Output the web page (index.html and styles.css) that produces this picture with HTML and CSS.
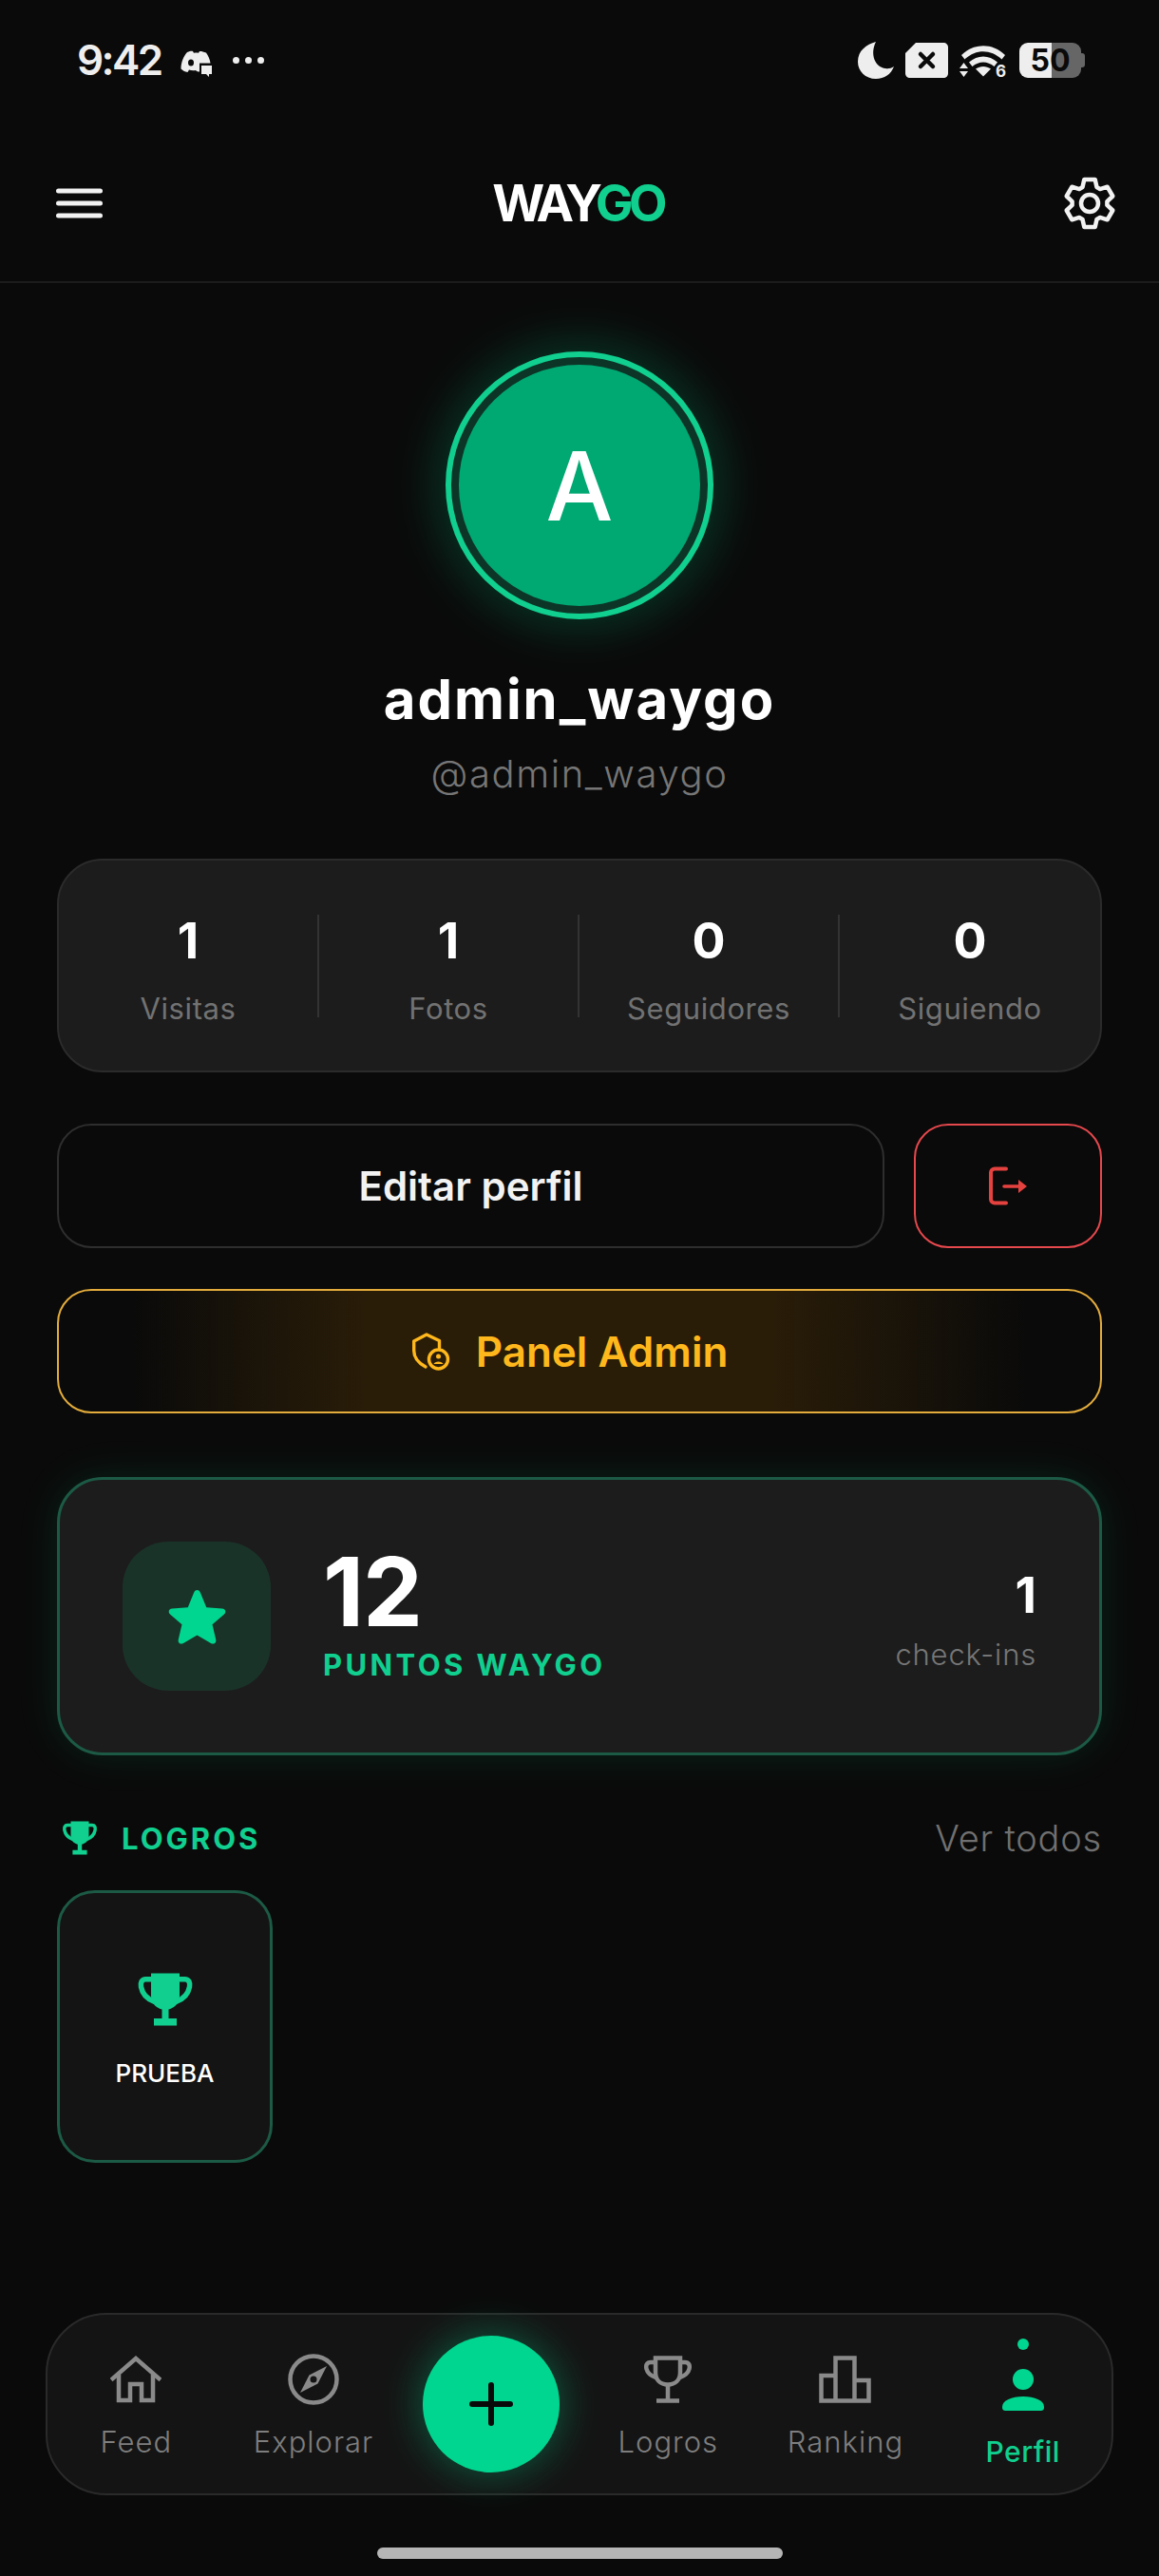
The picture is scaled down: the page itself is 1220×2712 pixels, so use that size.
FILE: index.html
```html
<!DOCTYPE html>
<html lang="es">

<head>
    <meta charset="UTF-8">
    <meta name="viewport" content="width=device-width, initial-scale=1.0">
    <title>WayGo - Perfil</title>
    <link rel="stylesheet" href="styles.css">
</head>

<body>
    <svg class="defs" width="0" height="0">
        <symbol id="trophy-solid" viewBox="0 0 24 24">
            <path d="M6 1h12v9.500c0 3-2 5-4.600 5.700V20h3.400v3H7.200v-3h3.400v-3.800C8 15.500 6 13.500 6 10.500z" fill="currentColor" />
            <path d="M6.500 3.500H3.800C2 3.500 1.500 5 1.800 6.700 2.300 9.500 4 11.700 7.500 13M17.500 3.500h2.700c1.800 0 2.300 1.500 2 3.200-.5 2.800-2.200 5-5.700 6.300" fill="none" stroke="currentColor" stroke-width="2.200" />
        </symbol>
    </svg>

    <div class="app">
        <div class="status-bar">
            <div class="status-left">
                <span class="time">9:42</span>
                <svg class="discord" viewBox="0 0 33 28" width="33" height="28">
                    <path d="M7 2c3-1.300 5-1.500 6-1l1 1.800c2-.3 3.500-.3 5 0L20 1c1.500-.3 4 .3 7 1.500 2.500 3.500 4 7.500 4.500 11H20v9c-1.500 0-3-.5-4-1.500-3 .5-5 0-7-.5L7.500 23C4.500 22.500 2 21 .5 19.500.5 13 3 6.500 7 2z" fill="#eee" />
                    <ellipse cx="11" cy="13" rx="3" ry="3.500" fill="#0a0a0a" />
                    <path d="M22 16h11v9h-3v3l-3-3h-5z" fill="#eee" />
                </svg>
                <span class="dots"><i></i><i></i><i></i></span>
            </div>
            <div class="status-right">
                <svg viewBox="0 0 38 39" width="38" height="39">
                    <path d="M19 0C9 3 0 9 0 21c0 10 8 18 19 18 9 0 16-5 19-13-3 2-6 2.500-9 2C19 27 12 14 19 0z" fill="#eee" />
                </svg>
                <svg viewBox="0 0 45 37" width="45" height="37">
                    <path d="M11 0h29c3 0 5 2 5 5v27c0 3-2 5-5 5H5c-3 0-5-2-5-5V11z" fill="#eee" />
                    <path d="M16 12l13 13M29 12L16 25" stroke="#0a0a0a" stroke-width="4.500" stroke-linecap="round" />
                </svg>
                <svg class="wifi" viewBox="0 0 51 37" width="51" height="37">
                    <path d="M2 13C15 0 35 0 48 13l-3.500 4.500C33 6.500 17 6.500 5.500 17.500z" fill="#eee" />
                    <path d="M10 20.500c9-8 21-8 30 0l-3.500 4.500c-7-6-16-6-23 0z" fill="#eee" />
                    <path d="M17 27.500c5-3.500 11-3.500 16 0l-8 8z" fill="#eee" />
                    <path d="M4.500 21l4.500 6H0zM4.500 36L9 30H0z" fill="#eee" />
                    <text x="38" y="36" class="wifi-six">6</text>
                </svg>
                <div class="battery">50</div>
            </div>
        </div>

        <header class="top-bar">
            <svg class="menu-icon" viewBox="0 0 49 32" width="49" height="32">
                <path d="M2.500 3h44M2.500 16h44M2.500 29h44" stroke="#f2f2f2" stroke-width="5" stroke-linecap="round" />
            </svg>
            <div class="logo">WAY<span>GO</span></div>
            <svg class="gear-icon" viewBox="0 0 56 56" width="56" height="56" fill="none" stroke="#f2f2f2" stroke-width="4.500" stroke-linejoin="round">
                <circle cx="28" cy="28" r="9" />
                <polygon transform="translate(28 28)" points="-7.500,-16.900 -5.700,-25 5.700,-25 7.500,-16.900 10.900,-14.950 18.600,-17.300 24.300,-7.500 18.400,-1.950 18.400,1.950 24.300,7.500 18.600,17.300 10.900,14.950 7.500,16.900 5.700,25 -5.700,25 -7.500,16.900 -10.900,14.950 -18.600,17.300 -24.300,7.500 -18.400,1.950 -18.400,-1.950 -24.300,-7.500 -18.600,-17.300 -10.900,-14.950" />
            </svg>
        </header>

        <main class="content">
            <section class="profile">
                <div class="avatar-ring">
                    <div class="avatar">A</div>
                </div>
                <h1 class="name">admin_waygo</h1>
                <p class="handle">@admin_waygo</p>
            </section>

            <section class="stats">
                <div class="stat">
                    <div class="stat-value">1</div>
                    <div class="stat-label">Visitas</div>
                </div>
                <div class="stat">
                    <div class="stat-value">1</div>
                    <div class="stat-label">Fotos</div>
                </div>
                <div class="stat">
                    <div class="stat-value">0</div>
                    <div class="stat-label">Seguidores</div>
                </div>
                <div class="stat">
                    <div class="stat-value">0</div>
                    <div class="stat-label">Siguiendo</div>
                </div>
            </section>

            <div class="actions">
                <button class="btn btn-edit">Editar perfil</button>
                <button class="btn btn-logout">
                    <svg viewBox="0 0 40 41" width="40" height="41" fill="none" stroke="#e5423f" stroke-width="4">
                        <path d="M18 2.500H6a4 4 0 0 0-4 4v28a4 4 0 0 0 4 4h12" stroke-linecap="round" />
                        <path d="M16 21h17" stroke-width="3.600" stroke-linecap="round" />
                        <path d="M31 14l9 7-9 7z" fill="#e5423f" stroke="none" />
                    </svg>
                </button>
            </div>

            <button class="btn btn-admin">
                <svg viewBox="0 0 40 40" width="40" height="40" fill="none" stroke="#ffb81c" stroke-width="3.400" stroke-linejoin="round" stroke-linecap="round">
                    <path d="M14 36C6.500 32 1.700 26 1.700 19V9L15 2l13.500 6.500V16" />
                    <circle cx="27.500" cy="28" r="10" />
                    <circle cx="27.500" cy="25" r="2.500" fill="#ffb81c" stroke="none" />
                    <path d="M22.500 33c1-3.500 9-3.500 10 0z" fill="#ffb81c" stroke="none" />
                </svg>
                Panel Admin
            </button>

            <section class="points">
                <div class="points-icon">
                    <svg viewBox="0 0 24 24" width="61" height="60">
                        <path d="M12 .800c.7 0 1.100.5 1.400 1.200l2.500 6.100 6.600.5c1.400.1 1.900 1.500.9 2.400l-5 4.300 1.500 6.400c.3 1.300-1 2.200-2.100 1.500L12 19.800l-5.800 3.400c-1.100.7-2.400-.2-2.100-1.500l1.500-6.400-5-4.300c-1-.9-.5-2.300.9-2.400l6.600-.5L10.600 2c.3-.7.700-1.200 1.400-1.200z" fill="#00d68f" />
                    </svg>
                </div>
                <div class="points-main">
                    <div class="points-value">12</div>
                    <div class="points-label">PUNTOS WAYGO</div>
                </div>
                <div class="points-side">
                    <div class="side-value">1</div>
                    <div class="side-label">check-ins</div>
                </div>
            </section>

            <section class="achievements">
                <div class="section-head">
                    <div class="section-title">
                        <svg width="38" height="38"><use href="#trophy-solid" /></svg>
                        LOGROS
                    </div>
                    <span class="see-all">Ver todos</span>
                </div>
                <div class="badge">
                    <svg width="60" height="60"><use href="#trophy-solid" /></svg>
                    <span>PRUEBA</span>
                </div>
            </section>
        </main>

        <nav class="tabs">
            <div class="tab">
                <svg viewBox="0 0 54 48" width="54" height="54" fill="none" stroke="#8a8a8a" stroke-width="4.500">
                    <path d="M1 24.500L27 2l26 22.500" />
                    <path d="M9 19v27h12V29h12v17h12V19" />
                </svg>
                <span>Feed</span>
            </div>
            <div class="tab">
                <svg viewBox="0 0 54 54" width="54" height="54">
                    <circle cx="27" cy="27" r="24.500" fill="none" stroke="#8a8a8a" stroke-width="4.500" />
                    <path d="M41 13L31.500 31.500 13 41 22.500 22.500z" fill="#8a8a8a" />
                    <circle cx="27" cy="27" r="3.500" fill="#141414" />
                </svg>
                <span>Explorar</span>
            </div>
            <div class="tab tab-fab">
                <button class="fab">
                    <svg viewBox="0 0 46 46" width="46" height="46">
                        <path d="M23 3v40M3 23h40" stroke="#0a0a0a" stroke-width="6" stroke-linecap="round" />
                    </svg>
                </button>
            </div>
            <div class="tab">
                <svg viewBox="0 0 50 50" width="50" height="54" fill="none" stroke="#8a8a8a" stroke-width="4.500">
                    <path d="M12 2.500h26v15c0 8-5 13-13 13s-13-5-13-13z" />
                    <path d="M12 7H7C3 7 1.500 10 2.500 14c1 4 4 7 10 9M38 7h5c4 0 5.500 3 4.500 7-1 4-4 7-10 9M25 30v17M13 47.500h24" />
                </svg>
                <span>Logros</span>
            </div>
            <div class="tab">
                <svg viewBox="0 0 55 50" width="55" height="54" fill="none" stroke="#8a8a8a" stroke-width="4.500">
                    <path d="M2.500 47.500V21h15v26.500zM17.500 47.500V2.500h20v45zM37.500 47.500V26h15v21.500z" />
                </svg>
                <span>Ranking</span>
            </div>
            <div class="tab tab-active">
                <i class="tab-dot"></i>
                <svg viewBox="0 0 44 44" width="44" height="44" fill="#00d68f">
                    <circle cx="22" cy="11" r="11" />
                    <path d="M0 40c0-7 10-11 22-11s22 4 22 11c0 3-1 4-4 4H4c-3 0-4-1-4-4z" />
                </svg>
                <span>Perfil</span>
            </div>
        </nav>

        <div class="home-row"><div class="home-bar"></div></div>
    </div>
</body>

</html>
```

FILE: styles.css
```css
* {
    box-sizing: border-box;
}

body {
    margin: 0;
    background-color: #0a0a0a;
    color: #fff;
    font-family: Inter, "Noto Sans", sans-serif;
}

.defs {
    display: block;
    height: 0;
}

.app {
    display: flex;
    flex-direction: column;
    height: 2712px;
    overflow: hidden;
}

/* status bar */
.status-bar {
    display: flex;
    justify-content: space-between;
    height: 131px;
    padding: 43px 82px 0 81px;
}

.status-left,
.status-right {
    display: flex;
    align-items: center;
    height: 40px;
}

.time {
    font-size: 44px;
    font-weight: 600;
    letter-spacing: -2.600px;
    color: #eee;
    margin-right: 20px;
}

.discord {
    margin: 8px 22px 0 0;
}

.dots {
    display: flex;
    gap: 6px;
}

.dots i {
    width: 7px;
    height: 7px;
    border-radius: 50%;
    background-color: #eee;
}

.status-right {
    gap: 12px;
}

.wifi {
    overflow: visible;
}

.wifi-six {
    font-size: 17px;
    font-weight: 700;
    fill: #eee;
}

.battery {
    position: relative;
    width: 65px;
    height: 37px;
    border-radius: 9px;
    background: linear-gradient(90deg, #eee 53%, #666 53%);
    color: #0a0a0a;
    font-size: 32px;
    font-weight: 700;
    line-height: 37px;
    text-align: center;
}

.battery::after {
    content: "";
    position: absolute;
    right: -4px;
    top: 11px;
    width: 4px;
    height: 15px;
    border-radius: 0 3px 3px 0;
    background-color: #666;
}

/* header */
.top-bar {
    display: grid;
    grid-template-columns: 1fr auto 1fr;
    align-items: center;
    height: 167px;
    padding: 0 45px;
    border-bottom: 2px solid #1c1c1c;
}

.menu-icon {
    margin-left: 14px;
}

.gear-icon {
    justify-self: end;
}

.logo {
    margin-right: 4px;
    font-size: 53px;
    font-weight: 700;
    letter-spacing: -4.800px;
}

.logo span {
    color: #10cf8f;
}

.content {
    padding: 0 60px;
}

/* avatar */
.profile {
    display: flex;
    flex-direction: column;
    align-items: center;
    padding-top: 72px;
}

.avatar-ring {
    width: 282px;
    height: 282px;
    padding: 8px;
    border: 6px solid #10cf8f;
    border-radius: 50%;
    background-color: #0c3527;
    box-shadow: 0 0 60px rgba(0, 214, 143, 0.3);
}

.avatar {
    display: flex;
    align-items: center;
    justify-content: center;
    height: 100%;
    border-radius: 50%;
    background-color: #00a872;
    font-size: 100px;
    font-weight: 500;
}

.name {
    margin: 49px 0 0;
    font-size: 58px;
    line-height: 70px;
    font-weight: 700;
    letter-spacing: 2px;
}

.handle {
    margin: 21px 0 0;
    font-size: 40px;
    line-height: 46px;
    font-weight: 300;
    letter-spacing: 1.600px;
    color: #767676;
}

/* stats */
.stats {
    display: grid;
    grid-template-columns: repeat(4, 1fr);
    height: 225px;
    margin-top: 66px;
    padding-top: 57px;
    background-color: #1c1c1c;
    border: 2px solid #2b2b2b;
    border-radius: 48px;
}

.stat {
    height: 108px;
    text-align: center;
    border-right: 2px solid #333;
}

.stat:last-child {
    border-right: none;
}

.stat-value {
    margin-top: -3px;
    font-size: 52px;
    line-height: 62px;
    font-weight: 700;
}

.stat-label {
    margin-top: 21px;
    font-size: 31px;
    line-height: 38px;
    color: #727272;
    letter-spacing: 0.600px;
}

/* buttons */
.actions {
    display: flex;
    gap: 31px;
    margin-top: 54px;
}

.btn {
    display: flex;
    align-items: center;
    justify-content: center;
    height: 131px;
    padding: 0;
    background-color: #0a0a0a;
    border-radius: 36px;
    font-family: inherit;
    color: #f2f2f2;
    cursor: pointer;
}

.btn-edit {
    flex: 1;
    border: 2px solid #2e2e2e;
    font-size: 42px;
    font-weight: 600;
}

.btn-logout {
    width: 198px;
    border: 2px solid #e5484d;
}

.btn-admin {
    gap: 27px;
    width: 100%;
    margin-top: 43px;
    padding-right: 20px;
    border: 2px solid #e3ac3c;
    background: linear-gradient(90deg, #0a0a0a 7%, #2a1d08 30%, #2a1d08 68%, #0a0a0a 93%);
    color: #ffb81c;
    font-size: 44px;
    font-weight: 600;
}

/* points */
.points {
    display: flex;
    align-items: center;
    height: 293px;
    margin-top: 67px;
    padding: 0 66px;
    background-color: #1c1c1c;
    border: 3px solid #1c5a45;
    border-radius: 48px;
    box-shadow: 0 0 44px rgba(0, 214, 143, 0.12);
}

.points-icon {
    display: flex;
    align-items: center;
    justify-content: center;
    width: 156px;
    height: 157px;
    border-radius: 48px;
    background-color: #1a3329;
}

.points-main {
    flex: 1;
    margin-left: 55px;
    padding-bottom: 9px;
}

.points-value {
    font-size: 100px;
    line-height: 104px;
    font-weight: 700;
    letter-spacing: -1px;
}

.points-label {
    margin-top: 7px;
    font-size: 31px;
    line-height: 36px;
    font-weight: 700;
    letter-spacing: 3.400px;
    color: #10cf8f;
}

.points-side {
    padding-top: 7px;
    text-align: right;
}

.side-value {
    font-size: 52px;
    line-height: 60px;
    font-weight: 700;
}

.side-label {
    margin-top: 14px;
    font-size: 31px;
    line-height: 36px;
    font-weight: 300;
    letter-spacing: 0.800px;
    color: #767676;
}

/* achievements */
.achievements {
    margin-top: 63px;
}

.section-head {
    display: flex;
    align-items: center;
    justify-content: space-between;
    height: 48px;
}

.section-title {
    display: flex;
    align-items: center;
    gap: 25px;
    padding-left: 5px;
    font-size: 31px;
    font-weight: 700;
    letter-spacing: 3px;
    color: #10cf8f;
}

.see-all {
    font-size: 38px;
    font-weight: 300;
    letter-spacing: 0.800px;
    color: #707070;
}

.badge {
    display: flex;
    flex-direction: column;
    align-items: center;
    justify-content: center;
    gap: 32px;
    width: 227px;
    height: 287px;
    margin-top: 31px;
    padding-top: 6px;
    background-color: #141414;
    border: 3px solid #1c5a45;
    border-radius: 40px;
    color: #10cf8f;
}

.badge span {
    font-size: 26px;
    font-weight: 500;
    color: #fff;
}

/* bottom nav */
.tabs {
    display: grid;
    grid-template-columns: repeat(6, 1fr);
    height: 192px;
    margin: auto 48px 0;
    background-color: #141414;
    border: 2px solid #2a2a2a;
    border-radius: 64px;
}

.tab {
    display: flex;
    flex-direction: column;
    align-items: center;
    padding-top: 41px;
    color: #7e7e7e;
    font-size: 31px;
    font-weight: 300;
    letter-spacing: 1px;
}

.tab span {
    margin-top: 20px;
    line-height: 38px;
}

.tab-fab {
    padding-top: 22px;
}

.fab {
    display: flex;
    align-items: center;
    justify-content: center;
    width: 144px;
    height: 144px;
    padding: 0;
    border: none;
    border-radius: 50%;
    background-color: #00d68f;
    box-shadow: 0 0 44px rgba(0, 214, 143, 0.4);
}

.tab-active {
    padding-top: 25px;
    color: #10cf8f;
    font-size: 30px;
    font-weight: 500;
    letter-spacing: 0.500px;
}

.tab-dot {
    width: 12px;
    height: 12px;
    margin-bottom: 20px;
    border-radius: 50%;
    background-color: #00d68f;
}

.tab-active span {
    margin-top: 24px;
}

.home-row {
    display: flex;
    justify-content: center;
    height: 85px;
    padding-top: 55px;
}

.home-bar {
    width: 427px;
    height: 12px;
    border-radius: 6px;
    background-color: #b5b5b5;
}
```
